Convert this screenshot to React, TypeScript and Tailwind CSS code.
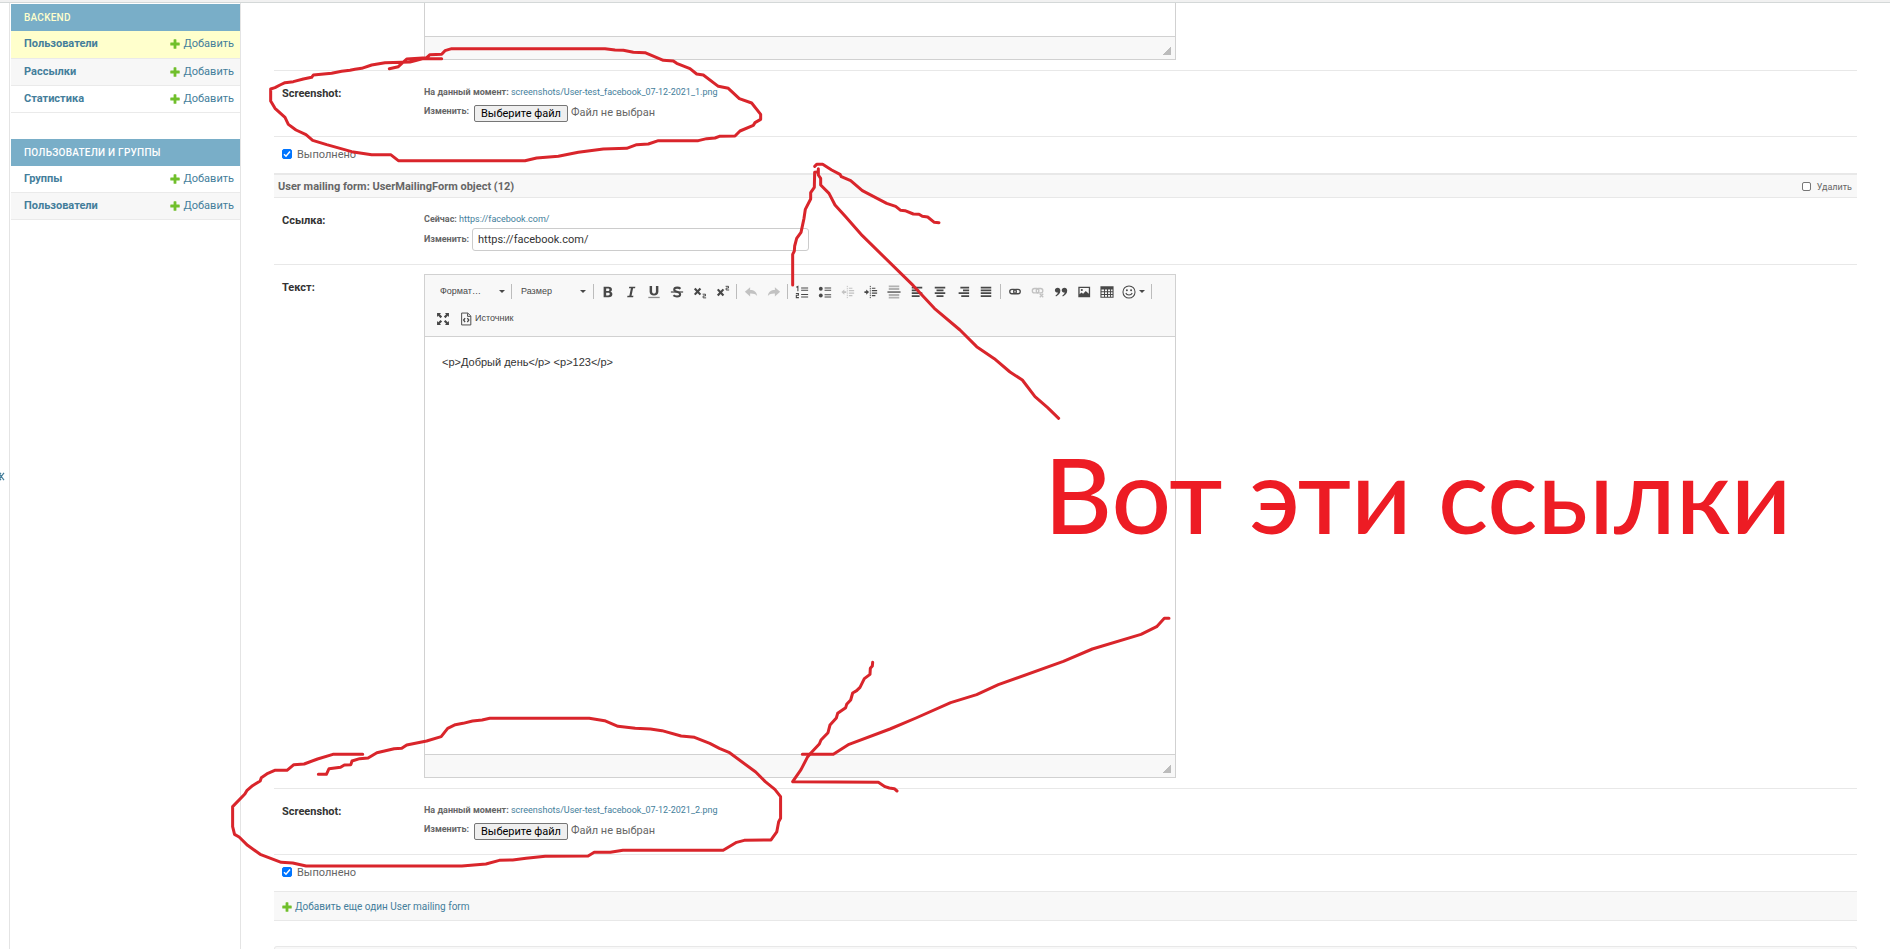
import React, { useState } from "react";

const NAV = [
  { title: "Backend", active: true, items: ["Пользователи", "Рассылки", "Статистика"], current: 0 },
  { title: "Пользователи и группы", active: false, items: ["Группы", "Пользователи"], current: -1 },
];

function Plus() {
  return (
    <svg viewBox="0 0 10 10" className="size-[10px] shrink-0" fill="#70bf2b" aria-hidden="true">
      <path d="M3.6 .8Q3.6 .3 4.1 .3h1.8q.5 0 .5.5v2.8h2.8q.5 0 .5.5v1.8q0 .5-.5.5H6.4v2.8q0 .5-.5.5H4.1q-.5 0-.5-.5V6.4H.8q-.5 0-.5-.5V4.1q0-.5.5-.5h2.8z" />
    </svg>
  );
}

function Sidebar() {
  return (
    <nav className="flex w-[231px] shrink-0 flex-col gap-[26px] border-r border-[#e4e4e4] pl-px pt-px">
      {NAV.map((g) => (
        <table key={g.title} className="w-full border-collapse">
          <caption className="h-[27px] bg-[#79aec8] pl-[13px] text-left text-[10px] leading-[27px] font-medium tracking-wide text-white uppercase">
            <a href="#section" className={g.active ? "text-[#ffffcc]" : "text-white"}>{g.title}</a>
          </caption>
          <tbody>
            {g.items.map((item, i) => (
              <tr
                key={item}
                className={
                  i === g.current
                    ? "h-[27px] border-b border-[#eaeaea] bg-[#ffffcc]"
                    : i % 2
                      ? "h-[27px] border-b border-[#eaeaea] bg-[#f7f7f7]"
                      : "h-[27px] border-b border-[#eaeaea] bg-white"
                }
              >
                <th scope="row" className="pl-[13px] text-left text-[11px] leading-[14px] font-bold text-[#447e9b]">
                  <a href="#model">{item}</a>
                </th>
                <td className="pr-[6px] text-[11px] leading-[14px] text-[#447e9b]">
                  <a href="#add" className="flex items-center justify-end gap-[3px]">
                    <Plus />
                    Добавить
                  </a>
                </td>
              </tr>
            ))}
          </tbody>
        </table>
      ))}
    </nav>
  );
}

function Row({ label, children }: { label: string; children: React.ReactNode }) {
  return (
    <div className="flex border-b border-[#e8e8e8] px-2 pt-[9px] pb-[10px]">
      <div className="w-[142px] shrink-0 pt-[6px] text-[11px] leading-[16px] font-bold text-[#333]">{label}</div>
      <div className="min-w-0 flex-1">{children}</div>
    </div>
  );
}

function FileRow({ n }: { n: number }) {
  const [name, setName] = useState("Файл не выбран");
  const id = "screenshot-" + n;
  return (
    <Row label="Screenshot:">
      <div className="h-[46px] pt-[5px] text-[9px] font-bold text-[#666]">
        <p className="leading-[14px]">
          На данный момент:{" "}
          <a href="#file" className="font-normal text-[#447e9b]">{"screenshots/User-test_facebook_07-12-2021_" + n + ".png"}</a>
        </p>
        <div className="flex items-start pt-[6px]">
          <label htmlFor={id} className="w-[50px] leading-[12px]">Изменить:</label>
          <button
            type="button"
            onClick={() => document.getElementById(id)?.click()}
            className="h-[17px] rounded-[2px] border border-[#767676] bg-[#efefef] px-[6px] text-[11px] leading-[15px] font-normal text-black"
          >
            Выберите файл
          </button>
          <input id={id} type="file" className="hidden" onChange={(e) => setName(e.target.files?.[0]?.name ?? "Файл не выбран")} />
          <span className="pl-[3px] text-[11px] leading-[16px] font-normal text-[#666]">{name}</span>
        </div>
      </div>
    </Row>
  );
}

function Done({ id }: { id: string }) {
  return (
    <div className="flex h-[36px] items-start gap-[5px] pt-[10px] pl-2">
      <span className="relative mt-[2px] block size-[10px]">
        <input id={id} type="checkbox" defaultChecked className="peer block size-[10px] appearance-none rounded-[2px] border border-[#767676] bg-white checked:border-[#0075ff] checked:bg-[#0075ff]" />
        <svg viewBox="0 0 10 10" className="pointer-events-none absolute inset-0 hidden peer-checked:block" fill="none" stroke="#fff" strokeWidth="1.5">
          <path d="M2 5.2l2 2L8 2.6" />
        </svg>
      </span>
      <label htmlFor={id} className="text-[11px] leading-[16px] text-[#666]">Выполнено</label>
    </div>
  );
}

const D = "#484848";

function Icon({ children, dim }: { children: React.ReactNode; dim?: boolean }) {
  return (
    <svg viewBox="0 0 16 16" className={dim ? "size-[14px] opacity-30" : "size-[14px]"} fill={D} aria-hidden="true">
      {children}
    </svg>
  );
}

function Tool({ title, dim, children }: { title: string; dim?: boolean; children: React.ReactNode }) {
  return (
    <button type="button" title={title} aria-label={title} className="flex h-[22px] w-[23px] items-center justify-center">
      <Icon dim={dim}>{children}</Icon>
    </button>
  );
}

function Sep() {
  return <span className="mx-[2px] h-[15px] w-px bg-[#bcbcbc]" />;
}

function Caret() {
  return <span className="border-x-[3px] border-t-[3px] border-x-transparent border-t-[#484848]" />;
}

const stroke = { fill: "none", stroke: D };

function Toolbar() {
  return (
    <div className="h-[62px] border-b border-[#d1d1d1] bg-[#f8f8f8] pt-[5px] pl-[6px] font-['Liberation_Sans',Arial,sans-serif] text-[9px] text-[#484848]">
      <div className="flex h-[23px] items-center">
        <button type="button" className="flex w-[78px] items-center justify-between pr-[4px] pl-[9px]">Формат…<Caret /></button>
        <Sep />
        <button type="button" className="flex w-[77px] items-center justify-between pr-[5px] pl-[7px]">Размер<Caret /></button>
        <Sep />
        <Tool title="Полужирный"><path fillRule="evenodd" d="M3 2h5.500c2.600 0 4 1 4 3.100 0 1.400-.7 2.300-1.900 2.700 1.500.3 2.400 1.300 2.400 2.900C13 12.900 11.400 14 8.800 14H3zM5.900 4.100v2.700h1.900c1.200 0 1.800-.4 1.800-1.400s-.6-1.300-1.800-1.300zm0 4.700v3.100h2.200c1.300 0 1.900-.5 1.900-1.600 0-1-.7-1.500-2-1.500z" /></Tool>
        <Tool title="Курсив"><path d="M6 2h7l-.4 1.800h-2.200L8.600 12.200h2.200l-.4 1.800H3.600l.4-1.800h2.100L7.900 3.800H5.600z" /></Tool>
        <Tool title="Подчеркнутый"><path d="M3 1h2.800v6.500c0 1.500.8 2.300 2.200 2.300s2.200-.8 2.200-2.300V1H13v6.700c0 2.800-1.900 4.200-5 4.200s-5-1.400-5-4.200z" /><path d="M1.500 13.500h13V15h-13z" opacity=".6" /></Tool>
        <Tool title="Зачеркнутый"><path {...stroke} strokeWidth="2.300" d="M12 4.300C11 3.300 9.700 3 8.200 3 6 3 4.800 3.900 4.800 5.300 4.800 8.200 11.600 7.300 11.600 10.600c0 1.500-1.300 2.500-3.600 2.500-1.700 0-3-.4-4.100-1.400" /><path d="M1 7.300h14v1.400H1z" /></Tool>
        <Tool title="Подстрочный индекс"><path {...stroke} strokeWidth="2.500" d="M2 4l6.500 7M8.500 4l-6.500 7" /><path {...stroke} strokeWidth="1.100" d="M11 10.500h3.300v2H11.600v2.200h3.400" /></Tool>
        <Tool title="Надстрочный индекс"><path {...stroke} strokeWidth="2.500" d="M2 5l6.500 7M8.500 5l-6.500 7" /><path {...stroke} strokeWidth="1.100" d="M11 1.500h3.300v2H11.600v2.200h3.400" /></Tool>
        <Sep />
        <Tool title="Отменить" dim><path d="M7 2.500v3.300c4.500 0 7.500 2 8 6.700-1.800-2.300-4-3-8-2.900V13L1 7.700z" /></Tool>
        <Tool title="Повторить" dim><path d="M9 2.500v3.300c-4.500 0-7.500 2-8 6.700 1.800-2.300 4-3 8-2.900V13l6-5.300z" /></Tool>
        <Sep />
        <div className="flex pr-px">
          <Tool title="Вставить / удалить нумерованный список"><path d="M7 2.800h8V4H7zM7 5.500h8v1.200H7zM7 10.300h8v1.200H7zM7 13h8v1.200H7z" /><path {...stroke} strokeWidth="1.200" d="M1.500 2.600L3.300 1.500V7M1 9.700h2.900v2H1.500v2.700h3" /></Tool>
          <Tool title="Вставить / удалить маркированный список"><circle cx="3.200" cy="4.300" r="2.200" /><circle cx="3.200" cy="12" r="2.200" /><path d="M7.500 2.800H15V4H7.500zM7.500 5.300H15v1.200H7.500zM7.500 10.500H15v1.200H7.500zM7.500 13H15v1.200H7.500z" /></Tool>
          <Tool title="Уменьшить отступ" dim><path {...stroke} strokeWidth="1.100" strokeDasharray="1.500 1" d="M7.200 1v14" /><path d="M9 3h4v1.300H9zM9 5.700h6V7H9zM9 8.700h6V10H9zM9 11.500h4v1.300H9zM3.800 5v2h2.200v2H3.800v2L.5 8z" /></Tool>
          <Tool title="Увеличить отступ"><path {...stroke} strokeWidth="1.100" strokeDasharray="1.500 1" d="M7.200 1v14" /><path d="M9 3h4v1.300H9zM9 5.700h6V7H9zM9 8.700h6V10H9zM9 11.500h4v1.300H9zM2.500 5v2H.5v2h2v2L5.800 8z" /></Tool>
          <Tool title="Создать Div-контейнер"><path d="M.5 7.300h15v1.500H.5z" /><path opacity=".4" d="M2 .500h12v2.200H2zM2 3.500h12v2.200H2zM2 10.300h12v2.200H2zM2 13.300h12v2.200H2z" /></Tool>
          <Tool title="По левому краю"><path d="M2 2h12v2H2zM2 5.200h8.500v2H2zM2 8.400h12v2H2zM2 11.600h9v2H2z" /></Tool>
          <Tool title="По центру"><path d="M2 2h12v2H2zM4 5.200h8v2H4zM2 8.400h12v2H2zM4 11.600h8v2H4z" /></Tool>
          <Tool title="По правому краю"><path d="M5 2h10v2H5zM8 5.200h7v2H8zM3 8.400h12v2H3zM6 11.600h9v2H6z" /></Tool>
          <Tool title="По ширине"><path d="M2 2h12v2H2zM2 5.200h12v2H2zM2 8.400h12v2H2zM2 11.600h12v2H2z" /></Tool>
        </div>
        <Sep />
        <Tool title="Вставить/Редактировать ссылку"><g {...stroke} strokeWidth="1.500"><rect x="2" y="5" width="7.500" height="5" rx="2.500" /><rect x="6.500" y="5" width="7.500" height="5" rx="2.500" /></g></Tool>
        <Tool title="Убрать ссылку" dim><g {...stroke} strokeWidth="1.500"><rect x="1.500" y="4" width="7.500" height="5" rx="2.500" /><rect x="6" y="4" width="7.500" height="5" rx="2.500" /><path d="M10 10l4 4M14 10l-4 4" /></g></Tool>
        <Tool title="Цитата"><path d="M4.200 3C6 3 7.300 4.300 7.300 6.400c0 3.200-2 5.500-5 6.600l-.6-1.100c1.700-.9 2.600-2 2.700-3.200C2.500 8.800 1 7.700 1 6c0-1.800 1.400-3 3.200-3zM12 3c1.800 0 3.100 1.300 3.100 3.400 0 3.200-2 5.500-5 6.600l-.6-1.100c1.700-.9 2.600-2 2.700-3.200-1.900.1-3.400-1-3.400-2.700 0-1.800 1.400-3 3.200-3z" /></Tool>
        <Tool title="Изображение"><path fillRule="evenodd" d="M1.500 2h13.500v12H1.500zM3 3.500v7l2-2 2 1.500 3-3.200 3.500 3.200V3.500z" /><circle cx="5.500" cy="5.700" r="1.200" /></Tool>
        <Tool title="Таблица"><path fillRule="evenodd" d="M.5 1.500h15v13H.5zM1.700 5.200v2h2.900v-2zm4 0v2h2.300v-2zm3.500 0v2h2.300v-2zm3.400 0v2h1.700v-2zM1.700 8.300v2h2.900v-2zm4 0v2h2.300v-2zm3.500 0v2h2.300v-2zm3.400 0v2h1.700v-2zM1.700 11.400v2h2.900v-2zm4 0v2h2.300v-2zm3.500 0v2h2.300v-2zm3.400 0v2h1.700v-2z" /></Tool>
        <button type="button" aria-label="Смайлы" className="flex h-[22px] w-[31px] items-center justify-center gap-[3px]">
          <Icon><circle cx="8" cy="8" r="6.900" {...stroke} strokeWidth="1.200" /><circle cx="5.600" cy="6" r="1.100" /><circle cx="10.400" cy="6" r="1.100" /><path {...stroke} strokeWidth="1.200" d="M4.300 9.200c1.200 3 6.200 3 7.400 0" /></Icon>
          <Caret />
        </button>
        <span className="ml-[2px] h-[15px] w-px bg-[#bcbcbc]" />
      </div>
      <div className="mt-[4px] flex h-[23px] items-center">
        <Tool title="Развернуть"><path d="M1.200 1.200h4.600L4.400 2.600 7 5.200 5.200 7 2.600 4.400 1.200 5.800zM14.800 1.200v4.600l-1.400-1.400L10.800 7 9 5.200l2.600-2.600-1.400-1.400zM1.200 14.800v-4.600l1.400 1.400L5.200 9 7 10.800l-2.600 2.600 1.400 1.400zM14.800 14.800h-4.600l1.400-1.400L9 10.800 10.800 9l2.600 2.600 1.400-1.400z" /></Tool>
        <button type="button" className="ml-[1px] flex h-[22px] items-center gap-[2px] pl-[4px]">
          <Icon><path {...stroke} strokeWidth="1.100" d="M3 1.200h7L13.500 4.500v10.300H3zM9.800 1.500V5h3.500" /><path {...stroke} strokeWidth="1.500" d="M7 7L5.300 9.200l1.700 2.200M9.500 7l1.700 2.200-1.700 2.200" /></Icon>
          Источник
        </button>
      </div>
    </div>
  );
}

function StatusBar() {
  return (
    <div className="flex h-[23px] items-end justify-end border-t border-[#d1d1d1] bg-[#f8f8f8] px-[4px] pb-[4px]">
      <span className="size-[8px] bg-[linear-gradient(135deg,transparent_50%,#bcbcbc_50%)]" />
    </div>
  );
}

function Annotations() {
  const line = { vectorEffect: "non-scaling-stroke" as const };
  return (
    <>
      <svg className="pointer-events-none absolute top-0 left-0 h-[949px] w-[1890px]" viewBox="0 0 1890 949" fill="none" stroke="#d9252b" strokeWidth="3" strokeLinecap="round" strokeLinejoin="round" aria-hidden="true">
        <g transform="translate(260 0) scale(.33333)">
          <polyline {...line} points="545,176 490,176 450,186 375,188 335,195 305,205 285,208 270,211 245,214 215,220 160,225 155,232 130,237 100,245 75,248 60,255 45,263 32,267 32,303 45,325 75,352 85,373 108,390 138,404 158,421 200,434 275,455 335,464 392,464 415,482 795,482 830,474 895,469 955,457 1030,447 1100,445 1130,434 1165,432 1195,422 1315,422 1340,416 1365,414 1378,409 1425,408 1440,393 1480,376 1485,368 1502,358 1502,343 1475,309 1438,296 1405,265 1375,259 1330,225 1310,222 1290,206 1250,190 1240,183 1210,181 1155,158 1120,157 1090,151 1065,150 1035,146 575,146 555,152 545,163 510,164 500,173 440,177 415,200 388,206" />
        </g>
        <g transform="translate(220 700) scale(.38265 .33333)">
          <polyline {...line} points="373,163 295,163 255,177 220,192 193,194 175,211 143,211 125,220 108,233 105,243 85,257 70,272 65,282 33,320 33,380 38,403 50,411 72,436 105,463 160,487 190,489 225,498 632,498 695,492 730,481 765,480 800,475 850,469 962,468 978,457 1020,457 1053,451 1315,451 1350,427 1370,421 1440,420 1455,396 1460,365 1465,355 1465,290 1450,268 1425,245 1400,216 1330,157 1305,145 1280,130 1240,112 1205,108 1155,92 1125,87 1085,85 1040,79 1005,62 965,55 705,55 685,60 660,63 635,70 615,74 595,85 578,110 540,123 488,135 475,145 455,146 410,158 387,174 365,176 345,183 342,194 325,195 315,202 285,206 278,223 257,223" />
        </g>
        <g transform="translate(780 140) scale(.33333)">
          <polyline {...line} points="836,835 803,803 765,770 727,720 690,696 643,656 590,620 540,570 463,505 400,437 247,287 197,230 165,195 147,160 122,135 122,115 115,105 115,86" />
          <polyline {...line} points="38,435 38,343 43,333 44,318 50,295 63,277 72,235 76,208 92,177 92,158 103,142 104,97 113,96" />
          <polyline {...line} points="104,79 110,73 128,73 155,90 180,103 184,110 212,122 247,152 320,190 347,199 362,211 375,212 400,222 417,223 427,229 443,231 463,247 477,248" />
        </g>
        <g transform="translate(780 600) scale(.33333)">
          <polyline {...line} points="1167,55 1153,55 1130,80 1083,103 937,147 850,184 655,254 590,284 512,308 408,354 330,387 207,433 160,463 67,463" />
          <polyline {...line} points="278,187 277,198 271,205 270,223 253,236 240,262 230,272 218,279 212,300 200,313 197,323 173,340 169,354 150,375 144,398 123,420 118,432 92,460 82,472 63,509 38,545 295,547 315,560 328,564 343,566 351,573" />
        </g>
      </svg>
      <p className="pointer-events-none absolute top-[429px] left-[1044px] font-['Lato','Open_Sans',sans-serif] text-[105px] leading-[128px] font-medium whitespace-nowrap text-[#ed1c24]">Вот эти ссылки</p>
    </>
  );
}

export default function App() {
  return (
    <div className="relative flex min-h-screen flex-col overflow-hidden bg-white font-['Roboto',sans-serif] text-[#333]">
      <div className="h-[3px] border-b border-[#d4d8d8] bg-[#f1f1f1]" />
      <div className="flex flex-1">
        <button type="button" aria-label="Свернуть навигацию" className="flex w-[10px] shrink-0 items-center justify-start border-r border-[#e4e4e4]">
          <svg viewBox="0 0 5 9" className="h-[9px] w-[5px]" fill="none" stroke="#447e9b" strokeWidth="1.200" aria-hidden="true">
            <path d="M-2 4.500L1 .8M-2 4.500L1 8.200M4 .8L1.300 4.500 4 8.200M0 3l1.300 1.500L0 6" />
          </svg>
        </button>
        <Sidebar />
        <main className="flex min-w-0 flex-1 flex-col pr-[33px] pl-[33px]">
          <div className="border-b border-[#e8e8e8] pb-[10px] pl-[150px]">
            <div className="w-[752px] border-x border-b border-[#d1d1d1]">
              <div className="h-[33px]" />
              <StatusBar />
            </div>
          </div>
          <FileRow n={1} />
          <Done id="done-1" />

          <h3 className="flex h-[25px] items-center justify-between border-t-2 border-b border-[#e8e8e8] bg-[#f8f8f8] pt-px pr-[5px] pl-[4px] text-[11px] leading-[16px] font-bold text-[#666]">
            <span>User mailing form: UserMailingForm object (12)</span>
            <label className="flex items-center gap-[6px] text-[9px] font-normal">
              <input type="checkbox" className="size-[9px] appearance-none rounded-[2px] border border-[#767676] bg-white checked:bg-[#0075ff]" />
              Удалить
            </label>
          </h3>
          <Row label="Ссылка:">
            <div className="h-[47px] pt-[5px] text-[9px] font-bold text-[#666]">
              <p className="leading-[14px]">Сейчас: <a href="https://facebook.com/" className="font-normal text-[#447e9b]">https://facebook.com/</a></p>
              <div className="flex items-center pt-[2px]">
                <label htmlFor="link" className="w-[48px]">Изменить:</label>
                <input id="link" type="url" defaultValue="https://facebook.com/" className="h-[23px] w-[337px] rounded-[3px] border border-[#ccc] px-[5px] text-[11px] font-normal text-[#333]" />
              </div>
            </div>
          </Row>
          <Row label="Текст:">
            <div className="w-[752px] border border-[#d1d1d1]">
              <Toolbar />
              <div role="textbox" aria-label="Текст" contentEditable suppressContentEditableWarning className="h-[417px] px-[17px] pt-[17px] font-['Liberation_Sans',Arial,sans-serif] text-[11px] leading-[17px] text-[#333]">
                {"<p>Добрый день</p> <p>123</p>"}
              </div>
              <StatusBar />
            </div>
          </Row>
          <FileRow n={2} />
          <Done id="done-2" />
          <div className="border-y border-[#e8e8e8] bg-[#f8f8f8] px-2 pt-[8px] pb-[6px]">
            <a href="#add-form" className="flex items-center gap-[3px] text-[10px] leading-[14px] text-[#447e9b]">
              <Plus />
              Добавить еще один User mailing form
            </a>
          </div>
          <div className="mt-[25px] flex-1 rounded-t-[3px] border border-b-0 border-[#e8e8e8] bg-[#f8f8f8]" />
        </main>
      </div>
      <Annotations />
    </div>
  );
}
